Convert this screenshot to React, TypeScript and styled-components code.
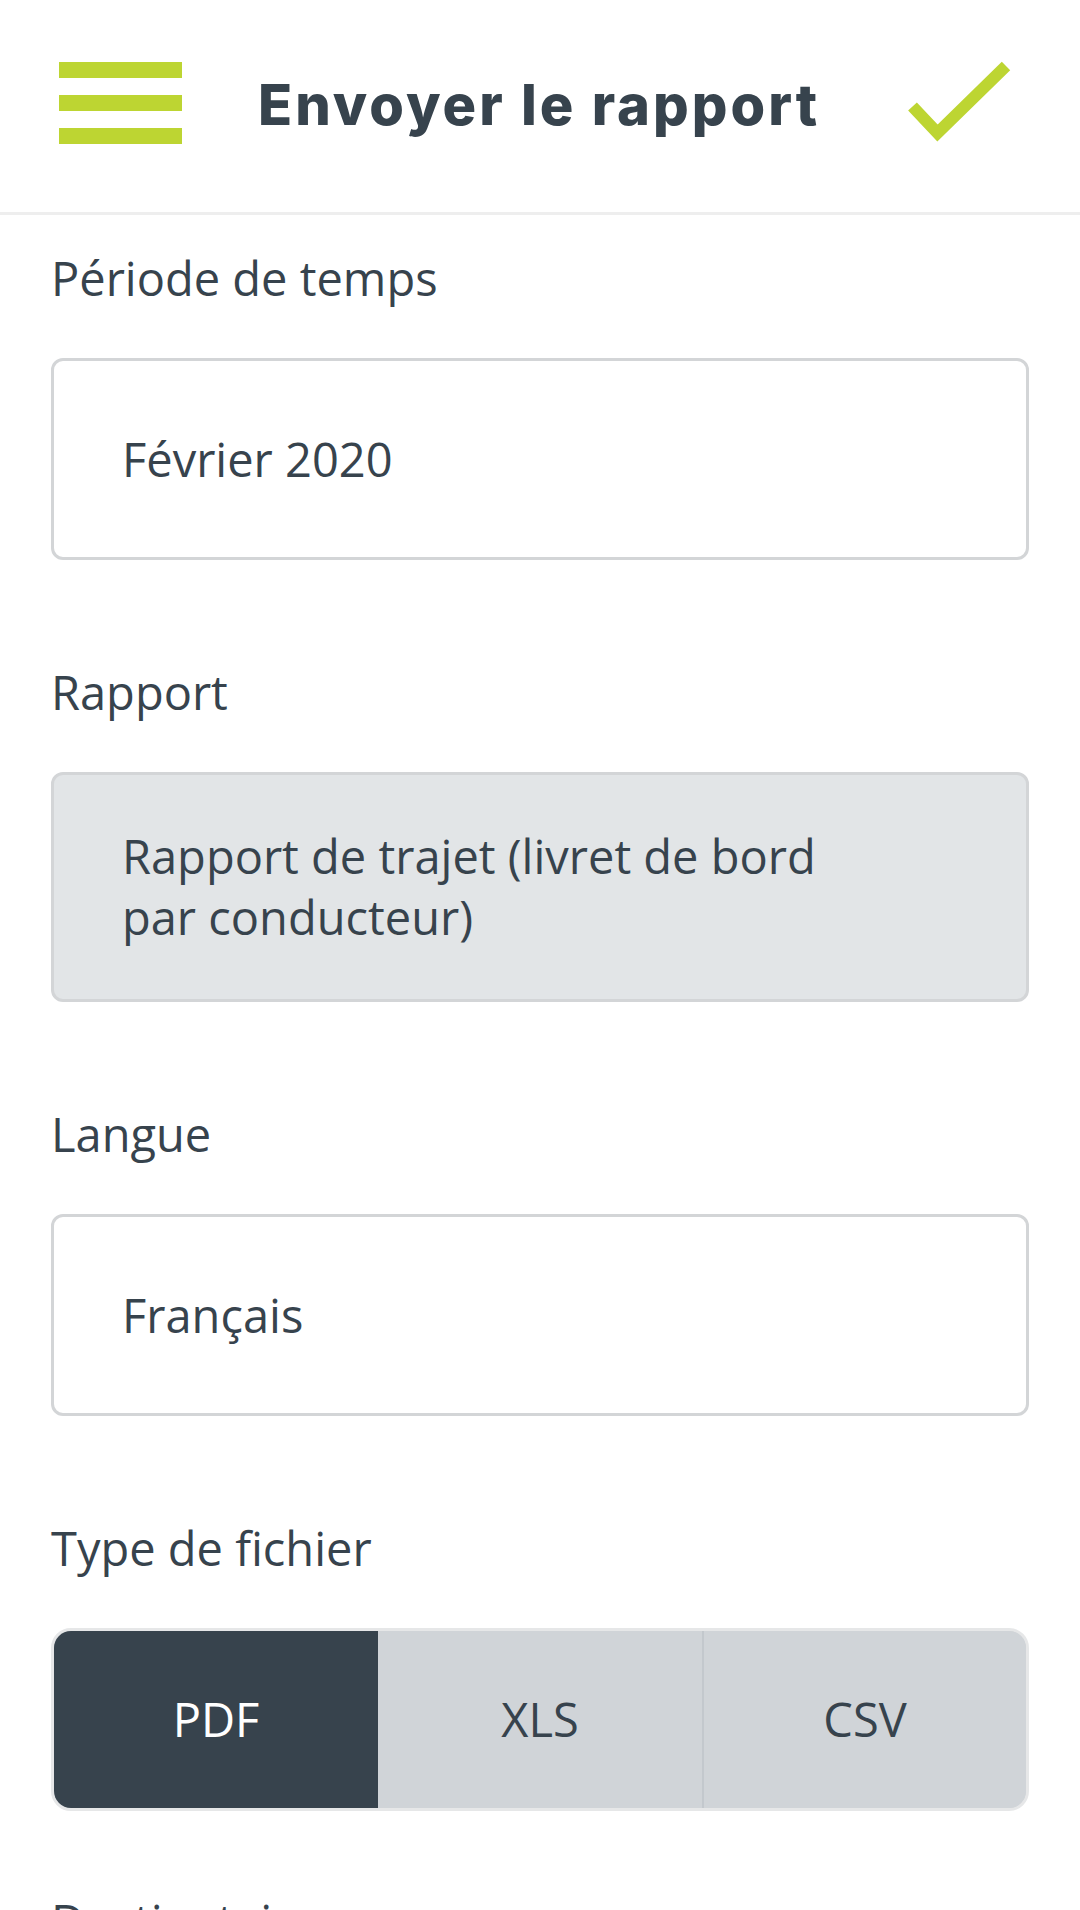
import React from "react";
import styled, { createGlobalStyle } from "styled-components";

const GlobalStyle = createGlobalStyle`
  html, body {
    margin: 0;
    padding: 0;
    background: #ffffff;
  }
  body {
    font-family: "Open Sans", "Noto Sans", sans-serif;
    color: #37434d;
  }
  * { box-sizing: border-box; }
`;

const Page = styled.div`
  width: 1080px;
  height: 1910px;
  overflow: hidden;
  background: #ffffff;
`;

const Header = styled.header`
  height: 215px;
  display: flex;
  align-items: center;
  padding: 0 0 6px 59px;
  border-bottom: 3px solid #eeeeee;
`;

const MenuButton = styled.button`
  width: 123px;
  padding: 0;
  border: 0;
  background: transparent;
  display: flex;
  flex-direction: column;
  gap: 17.5px;
  cursor: pointer;
`;

const Bar = styled.span`
  display: block;
  height: 15.5px;
  background: #bdd532;
`;

const Title = styled.h1`
  margin: 4px 0 0 76px;
  font-family: "Inter", "Open Sans", sans-serif;
  font-weight: 800;
  font-size: 56px;
  line-height: 1;
  color: #37434d;
  letter-spacing: 3px;
`;

const ConfirmButton = styled.button`
  margin-left: auto;
  margin-right: 65px;
  padding: 0;
  border: 0;
  background: transparent;
  display: flex;
  cursor: pointer;
`;

const Form = styled.main`
  padding: 31px 51px 0;
  display: flex;
  flex-direction: column;
`;

const Field = styled.section<{ $after?: number }>`
  display: flex;
  flex-direction: column;
  margin-bottom: ${(p) => p.$after ?? 100}px;
`;

const Label = styled.label`
  font-size: 47px;
  line-height: 64px;
  color: #37434d;
  margin-bottom: 48px;
`;

const InputBox = styled.div<{ $disabled?: boolean }>`
  min-height: 202px;
  display: flex;
  align-items: center;
  padding: 51px 160px 51px 68px;
  border: 3px solid #d3d5d7;
  border-radius: 12px;
  background: ${(p) => (p.$disabled ? "#e2e5e7" : "#ffffff")};
`;

const Value = styled.span`
  font-size: 47px;
  line-height: 61px;
  color: #37434d;
  max-width: 742px;
`;

const Segmented = styled.div`
  height: 183px;
  display: grid;
  grid-template-columns: repeat(3, 1fr);
  border: 3px solid #e6e7e8;
  border-radius: 20px;
  overflow: hidden;
  background: #d0d4d8;
`;

const Segment = styled.button<{ $active?: boolean; $divider?: boolean }>`
  border: 0;
  border-left: ${(p) => (p.$divider ? "2px solid #c3c8cd" : "0")};
  padding: 0;
  margin: 0;
  font-family: "Open Sans", "Noto Sans", sans-serif;
  font-size: 47px;
  line-height: 1;
  background: ${(p) => (p.$active ? "#37434d" : "#d0d4d8")};
  color: ${(p) => (p.$active ? "#ffffff" : "#37434d")};
  display: flex;
  align-items: center;
  justify-content: center;
  cursor: pointer;
`;

const CheckIcon = () => (
  <svg width="110" height="90" viewBox="0 0 110 90" aria-hidden="true">
    <polyline
      points="7.5,48.5 32.5,75 101,8"
      fill="none"
      stroke="#bdd532"
      strokeWidth="12"
      strokeLinecap="butt"
      strokeLinejoin="miter"
    />
  </svg>
);

export default function App() {
  return (
    <Page>
      <GlobalStyle />
      <Header>
        <MenuButton aria-label="Menu">
          <Bar />
          <Bar />
          <Bar />
        </MenuButton>
        <Title>Envoyer le rapport</Title>
        <ConfirmButton aria-label="Envoyer">
          <CheckIcon />
        </ConfirmButton>
      </Header>
      <Form>
        <Field>
          <Label>Période de temps</Label>
          <InputBox>
            <Value>Février 2020</Value>
          </InputBox>
        </Field>
        <Field>
          <Label>Rapport</Label>
          <InputBox $disabled>
            <Value>Rapport de trajet (livret de bord par conducteur)</Value>
          </InputBox>
        </Field>
        <Field>
          <Label>Langue</Label>
          <InputBox>
            <Value>Français</Value>
          </InputBox>
        </Field>
        <Field $after={78}>
          <Label>Type de fichier</Label>
          <Segmented>
            <Segment $active>PDF</Segment>
            <Segment>XLS</Segment>
            <Segment $divider>CSV</Segment>
          </Segmented>
        </Field>
        <Field>
          <Label>Destinataire</Label>
        </Field>
      </Form>
    </Page>
  );
}
